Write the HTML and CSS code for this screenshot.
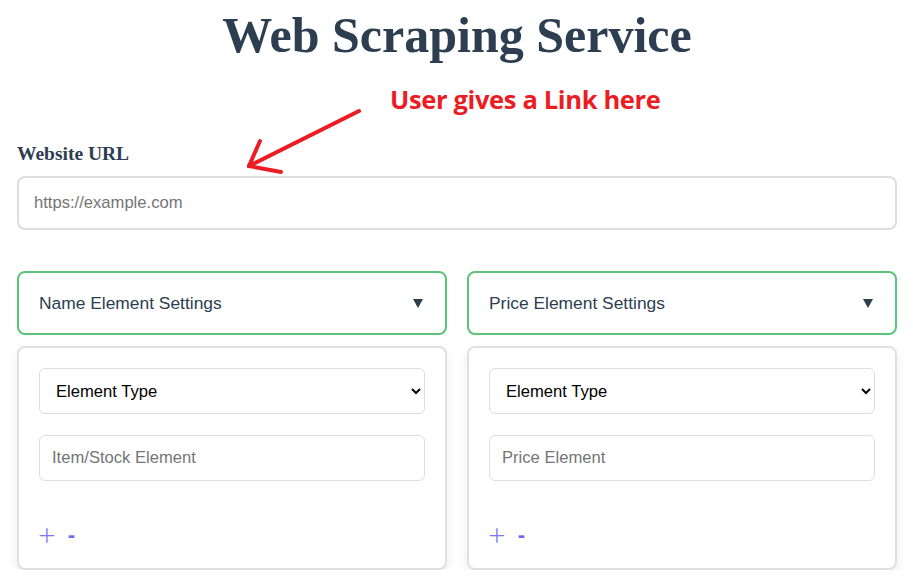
FILE: index.html
```html
<!DOCTYPE html>
<html lang="en">
<head>
<meta charset="utf-8">
<title>Web Scraping Service</title>
<link rel="stylesheet" href="styles.css">
</head>
<body>
<div class="page">
  <h1 class="title">Web Scraping Service</h1>

  <div class="annotation">
    <span class="annotation-text">User gives a Link here</span>
    <svg class="annotation-arrow" width="130" height="80" viewBox="0 0 130 80">
      <g stroke="#ec1c24" stroke-width="4" stroke-linecap="round" fill="none">
        <line x1="119" y1="11" x2="9" y2="66"/>
        <line x1="9" y1="66" x2="20" y2="41"/>
        <line x1="9" y1="66" x2="41" y2="72"/>
      </g>
    </svg>
  </div>

  <label class="field-label" for="url">Website URL</label>
  <input id="url" class="url-input" type="text" placeholder="https://example.com">

  <div class="columns">
    <section class="column">
      <div class="panel-header">
        <span>Name Element Settings</span>
        <svg class="caret" width="10" height="9" viewBox="0 0 10 9"><path d="M0 0H10L5 9Z" fill="#2c3e50"/></svg>
      </div>
      <div class="panel-body">
        <select class="field select">
          <option>Element Type</option>
        </select>
        <input class="field" type="text" placeholder="Item/Stock Element">
        <div class="actions">
          <span class="plus">+</span>
          <span class="minus">-</span>
        </div>
      </div>
    </section>
    <section class="column">
      <div class="panel-header">
        <span>Price Element Settings</span>
        <svg class="caret" width="10" height="9" viewBox="0 0 10 9"><path d="M0 0H10L5 9Z" fill="#2c3e50"/></svg>
      </div>
      <div class="panel-body">
        <select class="field select">
          <option>Element Type</option>
        </select>
        <input class="field" type="text" placeholder="Price Element">
        <div class="actions">
          <span class="plus">+</span>
          <span class="minus">-</span>
        </div>
      </div>
    </section>
  </div>
</div>
</body>
</html>
```

FILE: styles.css
```css
* { box-sizing: border-box; }

html, body {
  margin: 0;
  padding: 0;
  background: #ffffff;
}

body {
  font-family: "Liberation Sans", Arial, sans-serif;
  color: #2c3e50;
}

.page {
  position: relative;
  padding: 0 16px 0 17px;
}

.title {
  margin: 0;
  padding-top: 4px;
  text-align: center;
  font-family: "Liberation Serif", "Times New Roman", serif;
  font-weight: bold;
  font-size: 50px;
  line-height: 62px;
  color: #2c3e50;
}

.annotation {
  position: absolute;
  left: 240px;
  top: 84px;
  width: 440px;
  height: 100px;
  pointer-events: none;
}

.annotation-text {
  position: absolute;
  left: 150px;
  top: -2px;
  font-family: "Open Sans", "Noto Sans", sans-serif;
  font-weight: 700;
  font-size: 25.5px;
  letter-spacing: -0.35px;
  color: #ec1c24;
  white-space: nowrap;
}

.annotation-arrow {
  position: absolute;
  left: 0;
  top: 16px;
}

.field-label {
  display: block;
  margin-top: 78px;
  font-family: "Liberation Serif", "Times New Roman", serif;
  font-weight: bold;
  font-size: 19.5px;
  line-height: 20px;
  color: #2c3e50;
}

.url-input {
  display: block;
  width: 100%;
  height: 54px;
  margin-top: 12px;
  padding: 0 15px;
  border: 2px solid #dddddd;
  border-radius: 8px;
  font-family: "Liberation Sans", Arial, sans-serif;
  font-size: 16.6px;
  color: #333;
  outline: none;
}

.url-input::placeholder,
.field::placeholder {
  color: #757575;
}

.columns {
  display: flex;
  gap: 20px;
  margin-top: 41px;
}

.column {
  flex: 1 1 0;
  min-width: 0;
}

.panel-header {
  display: flex;
  align-items: center;
  justify-content: space-between;
  height: 64px;
  padding: 0 22px 0 20px;
  border: 2px solid #5cc47a;
  border-radius: 8px;
  font-size: 17.4px;
  color: #2c3e50;
}

.caret {
  display: block;
  flex: none;
}

.panel-body {
  margin-top: 11px;
  padding: 20px 20px 20px;
  border: 2px solid #e0e0e0;
  border-radius: 8px;
  background: #fff;
  box-shadow: 0 4px 12px rgba(0, 0, 0, 0.08);
}

.field {
  display: block;
  width: 100%;
  height: 46px;
  padding: 0 12px;
  border: 1px solid #dddddd;
  border-radius: 6px;
  background: #fff;
  font-family: "Liberation Sans", Arial, sans-serif;
  font-size: 16.6px;
  color: #000;
  outline: none;
}

.select {
  margin-bottom: 21px;
}

.actions {
  display: flex;
  align-items: center;
  height: 26px;
  margin-top: 41px;
  color: #6b6bf7;
}

.plus {
  font-family: "Open Sans", "Noto Sans", sans-serif;
  font-size: 31px;
  font-weight: 300;
  line-height: 26px;
  margin-left: -1px;
  margin-right: 12px;
  color: #7a7af7;
}

.minus {
  font-size: 22px;
  font-weight: bold;
  line-height: 26px;
}
```
